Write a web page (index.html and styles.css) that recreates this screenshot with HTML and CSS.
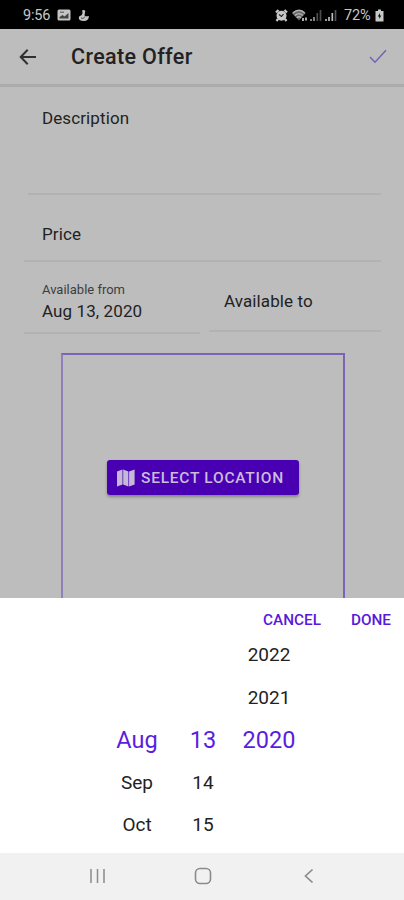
FILE: index.html
```html
<!DOCTYPE html>
<html lang="en">
<head>
<meta charset="utf-8">
<title>Create Offer</title>
<link rel="stylesheet" href="styles.css">
</head>
<body>
<div class="phone">
  <div class="status">
    <span class="clock">9:56</span>
    <svg class="pic" width="14" height="12" viewBox="0 0 14 12"><rect x=".5" y=".5" width="13" height="11" rx="1.5" fill="#c4c4c4"/><path d="M2.500 9.500V8l3-2 2 1.500 4-3.500v5.500z" fill="#444"/><path d="M3 3.200h4" stroke="#555"/></svg>
    <svg class="app" width="12" height="13" viewBox="0 0 12 13"><path d="M4 1.500C6 0 8 1.500 7 3.500L6.500 6.500c1.500 1 3 1 4.500.5-.2 3.500-2 5-5 5C2.500 12 .8 11 .8 9c0-1.500 1-2.500 2.500-2.500C4.500 5 5 3.500 4 1.500z" fill="#c4c4c4"/><path d="M3 9c2 .8 3.500 0 4-1.500" stroke="#444" fill="none"/></svg>
    <span class="grow"></span>
    <svg class="alarm" width="13" height="13" viewBox="0 0 13 13"><path d="M1 3.500 3.500 1M12 3.500 9.500 1M3 10l-1.500 2M10 10l1.500 2" stroke="#c8c8c8" stroke-width="2.200"/><circle cx="6.500" cy="6.700" r="5" fill="#c8c8c8"/><path d="M4 5.500 6.500 7.500l2-2.500" stroke="#222" fill="none" stroke-width="1.200"/></svg>
    <svg class="wifi" width="16" height="13" viewBox="0 0 16 13"><path d="M0 4.200C4 0 10 0 13.600 4.200L7 11.500z" fill="#666"/><path d="M.8 4c4-3.500 8.500-3.500 12 0M2.800 6.500c2.800-2.500 5.500-2.500 8 0M4.800 8.800c1.500-1.300 3-1.300 4.200 0" fill="none" stroke="#b5b5b5" stroke-width="1.300"/><path d="M11 9v3M14 8.500v3" stroke="#ccc" stroke-width="1.700"/></svg>
    <svg class="sig" width="12" height="13" viewBox="0 0 12 13"><path d="M1 10v2M4 8v4" stroke="#999" stroke-width="1.700"/><path d="M7.300 4v8M10.500 1v11" stroke="#4c4c4c" stroke-width="1.700"/></svg>
    <svg class="sig" width="12" height="13" viewBox="0 0 12 13"><path d="M1 10v2M4 8v4M7.300 4v8" stroke="#bbb" stroke-width="1.700"/><path d="M10.500 1v11" stroke="#555" stroke-width="1.700"/></svg>
    <span class="pct">72%</span>
    <svg class="bat" width="9" height="13" viewBox="0 0 9 13"><path d="M3 .5h3V2h2.500v10.500h-8V2H3z" fill="#c8c8c8"/><path d="M5 4 2.700 7.500h1.500V10l2.200-3.500H5z" fill="#111"/></svg>
  </div>

  <header class="toolbar">
    <svg class="back" width="18" height="18" viewBox="0 0 18 18"><path d="M17 9H2M8.700 1.800 1.700 9l7 7.200" fill="none" stroke="#303030" stroke-width="2"/></svg>
    <h1>Create Offer</h1>
    <svg class="check" width="18" height="15" viewBox="0 0 18 15"><path d="M1 8l5 5.200L17 1.200" fill="none" stroke="#7562b5" stroke-width="1.500"/></svg>
  </header>

  <main class="form">
    <div class="field description"><span class="t">Description</span></div>
    <div class="field price"><span class="t">Price</span></div>
    <div class="dates">
      <div class="field from"><small>Available from</small><span class="t">Aug 13, 2020</span></div>
      <div class="field to"><span class="t">Available to</span></div>
    </div>
    <div class="map">
      <button class="select">
        <svg width="18" height="18" viewBox="0 0 18 18"><path d="M0 2.500 5.500.5v15l-5.500 2zM6.200.5l5.200 2v15l-5.200-2zM12.100 2.500l5.500-2v15l-5.500 2z" fill="#c5b9d8"/></svg>
        <span>SELECT LOCATION</span>
      </button>
    </div>
  </main>

  <section class="sheet">
    <div class="actions"><span class="cancel">CANCEL</span><span class="done">DONE</span></div>
    <div class="wheel">
      <span></span><span></span><span>2022</span>
      <span></span><span></span><span>2021</span>
      <b>Aug</b><b>13</b><b>2020</b>
      <span>Sep</span><span>14</span><span></span>
      <span>Oct</span><span>15</span><span></span>
    </div>
  </section>

  <nav class="nav">
    <svg width="18" height="18" viewBox="0 0 18 18"><path d="M3 2v14M9.500 2v14M16 2v14" stroke="#8b8b8b" stroke-width="1.500"/></svg>
    <svg width="18" height="18" viewBox="0 0 18 18"><rect x="1.500" y="1.500" width="15" height="15" rx="4.500" fill="none" stroke="#8b8b8b" stroke-width="1.600"/></svg>
    <svg width="18" height="18" viewBox="0 0 18 18"><path d="M12.500 2.500 5.500 9l7 6.500" fill="none" stroke="#8b8b8b" stroke-width="1.700"/></svg>
  </nav>
</div>
</body>
</html>
```
FILE: styles.css
```css
* { box-sizing: border-box; }
body { margin: 0; font-family: Roboto, "Liberation Sans", sans-serif; color: #222; }
svg { display: block; flex: none; }
.phone { width: 404px; height: 900px; display: flex; flex-direction: column; overflow: hidden; background: #bdbdbd; }

.status { height: 29px; flex: none; background: #000; color: #c8c8c8; display: flex; align-items: center; padding: 1px 20px 0 23px; font-size: 14.5px; }
.clock { width: 28px; letter-spacing: -.2px; }
.pic { margin-left: 6px; }
.app { margin-left: 7px; }
.grow { flex: 1; }
.wifi { margin-left: 4px; }
.sig { margin-left: 3px; }
.wifi + .sig { margin-left: 2px; }
.pct { width: 28px; margin-left: 7px; letter-spacing: -.1px; }
.bat { margin-left: 3px; }

.toolbar { height: 58px; flex: none; display: flex; align-items: center; padding: 1px 17px 1px 19px; border-bottom: 3px solid #acacac; }
.toolbar h1 { margin: 0 auto 0 34px; font-size: 21.5px; font-weight: 500; letter-spacing: .35px; line-height: 28px; }

.form { flex: 1; min-height: 0; overflow: hidden; padding: 0 23px 0 24px; display: flex; flex-direction: column; }
.field { border-bottom: 2px solid #b2b2b2; font-size: 17px; line-height: 22px; letter-spacing: .1px; }
.t { display: block; }
.description { height: 108px; flex: none; margin-left: 4px; padding: 20px 0 0 14px; }
.price { height: 67px; flex: none; padding: 28px 0 0 18px; }
.dates { display: flex; gap: 9px; height: 72px; flex: none; align-items: flex-start; }
.from { width: 176px; height: 72px; padding: 19px 0 0 18px; }
.from small { display: block; font-size: 13px; line-height: 18px; letter-spacing: 0; color: #3d3d3d; }
.from .t { margin-top: 1px; }
.to { flex: 1; height: 70px; padding: 28px 0 0 15px; }
.map { width: 284px; height: 300px; flex: none; margin: 19px 0 0 37px; border: 2px solid #7c63b5; border-left-color: #917fbb; display: flex; justify-content: center; align-items: flex-start; padding-top: 105px; }
.select { width: 192px; height: 35px; border: 0; border-radius: 3px; background: #4900b2; color: #c9bddc; display: flex; align-items: center; gap: 6px; padding: 0 0 0 10px; font: 500 15.5px Roboto, sans-serif; letter-spacing: .75px; white-space: nowrap; box-shadow: 0 2px 3px rgba(0,0,0,.3); }

.sheet { height: 255px; flex: none; background: #fff; color: #222; }
.actions { height: 36px; padding: 8px 13px 0 0; display: flex; justify-content: flex-end; gap: 30px; color: #5a18dc; font-size: 15.3px; line-height: 28px; font-weight: 500; }
.wheel { display: grid; grid-template-columns: repeat(3, 66px); grid-auto-rows: 42.5px; margin-left: 104px; text-align: center; align-items: center; font-size: 19px; line-height: 42px; }
.wheel b { color: #5b1de0; font-weight: 400; font-size: 23.5px; }

.nav { height: 47px; flex: none; background: #f1f1f1; display: flex; justify-content: center; gap: 88px; padding: 14px 0 0 2px; }
```
